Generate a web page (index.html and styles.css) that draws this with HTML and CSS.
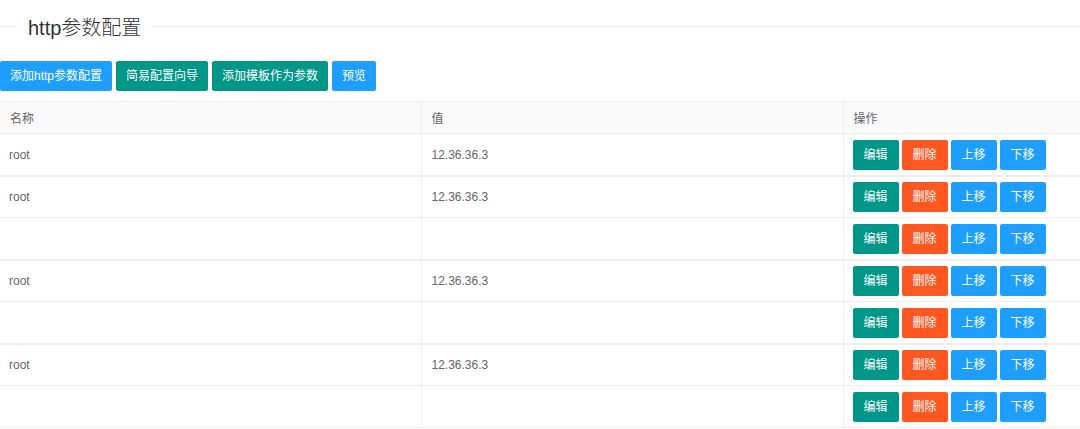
FILE: index.html
```html
<!DOCTYPE html>
<html>
<head>
    <title>http参数配置</title>
    <link rel="stylesheet" href="styles.css">
</head>
<body>
    <fieldset class="title-field">
        <legend>http参数配置</legend>
    </fieldset>

    <div class="toolbar">
        <button class="btn btn-normal">添加http参数配置</button>
        <button class="btn">简易配置向导</button>
        <button class="btn">添加模板作为参数</button>
        <button class="btn btn-normal">预览</button>
    </div>

    <table class="param-table">
        <colgroup>
            <col class="col-name">
            <col class="col-value">
            <col>
        </colgroup>
        <thead>
            <tr>
                <th>名称</th>
                <th>值</th>
                <th>操作</th>
            </tr>
        </thead>
        <tbody id="rows"></tbody>
    </table>

    <script>
        const ROWS = [
            { name: 'root', value: '12.36.36.3', group: true },
            { name: 'root', value: '12.36.36.3', group: true },
            { name: '', value: '' },
            { name: 'root', value: '12.36.36.3', group: true },
            { name: '', value: '' },
            { name: 'root', value: '12.36.36.3', group: true },
            { name: '', value: '' }
        ];

        function renderRows() {
            const body = document.getElementById('rows');
            body.innerHTML = '';

            ROWS.forEach((row, i) => {
                const tr = document.createElement('tr');
                if (row.group && i > 0) tr.className = 'group-start';
                tr.innerHTML = `
                    <td>${row.name}</td>
                    <td>${row.value}</td>
                    <td>
                        <div class="actions">
                            <button class="btn btn-xs">编辑</button>
                            <button class="btn btn-xs btn-danger">删除</button>
                            <button class="btn btn-xs btn-normal">上移</button>
                            <button class="btn btn-xs btn-normal">下移</button>
                        </div>
                    </td>`;
                body.appendChild(tr);
            });
        }

        renderRows();
    </script>
</body>
</html>
```

FILE: styles.css
```css
body {
    margin: 0;
    background: #fff;
    font-family: "Liberation Sans", "Noto Sans CJK SC", sans-serif;
    color: #666;
    font-size: 12px;
}

.title-field {
    margin: 10px 0 0;
    padding: 0;
    border: none;
    border-top: 1px solid #eee;
    height: 20px;
}

.title-field legend {
    margin-left: 18px;
    padding: 4px 10px 0;
    font-size: 20px;
    font-weight: 300;
    color: #333;
    line-height: 28px;
}

.toolbar {
    display: flex;
    gap: 4px;
    margin-top: 19px;
}

.btn {
    height: 30px;
    line-height: 28px;
    padding: 0 9px;
    border: 1px solid transparent;
    border-radius: 2px;
    background: #009688;
    color: #fff;
    font-family: inherit;
    font-size: 12px;
    white-space: nowrap;
    cursor: pointer;
}

.btn-normal {
    background: #1E9FFF;
}

.btn-danger {
    background: #FF5722;
}

.btn-xs {
    padding: 0 10px;
}

.param-table {
    width: 100%;
    margin-top: 10px;
    border-collapse: collapse;
    table-layout: fixed;
}

.col-name {
    width: 421px;
}

.col-value {
    width: 422px;
}

.param-table th,
.param-table td {
    border: 1px solid #eee;
    text-align: left;
    font-weight: normal;
    color: #666;
    padding: 0 10px;
}

.param-table tr > :first-child {
    border-left: none;
}

.param-table tr > :last-child {
    border-right: none;
}

.param-table th {
    height: 31px;
    background: #fafafa;
}

.param-table td {
    height: 41px;
    padding: 0 9px;
}

.param-table td + td {
    padding-left: 10px;
}

.param-table td:last-child {
    padding-left: 9px;
}

.param-table tr.group-start td {
    height: 40px;
    border-top: 2px solid #eee;
}

.actions {
    display: flex;
    gap: 3px;
}
```
